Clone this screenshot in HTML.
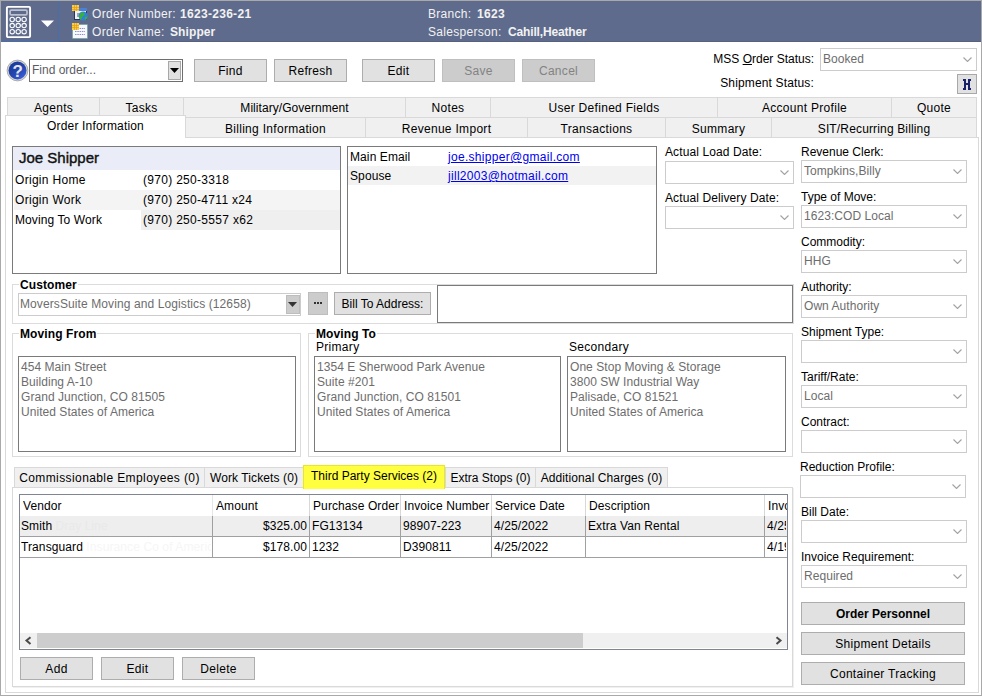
<!DOCTYPE html>
<html><head><meta charset="utf-8">
<style>
*{box-sizing:border-box;margin:0;padding:0}
html,body{width:982px;height:696px;overflow:hidden;background:#fff}
body{position:relative;font-family:"Liberation Sans",sans-serif;font-size:12px;color:#000;letter-spacing:0.3px}
.a{position:absolute}
.t{position:absolute;white-space:pre;line-height:14px}
.b{font-weight:bold}
.frame{left:0;top:0;width:982px;height:696px;border:1px solid #a9a9a9}
.hdr{left:1px;top:1px;width:980px;height:41px;background:#5f6b8c}
.ht{color:#f2f2f2}
.btn{position:absolute;background:#e1e1e1;border:1px solid #adadad;text-align:center;line-height:21px;height:23px;padding-top:1px}
.dis{background:#cccccc;border-color:#bfbfbf;color:#838383}
.tab{position:absolute;background:#f0f0f0;border:1px solid #d9d9d9;text-align:center;line-height:17px;padding-top:2px}
.grp{position:absolute;border:1px solid #dcdcdc}
.gl{position:absolute;background:#fff;font-weight:bold;padding:0 1px 0 1px;line-height:14px;white-space:pre;letter-spacing:0.1px}
.cmb{position:absolute;border:1px solid #cccccc;background:#fff;height:23px;color:#6d6d6d;line-height:21px;padding-left:2px;white-space:pre;letter-spacing:0.05px}
.chev{position:absolute;right:4px;top:8px;width:9px;height:5px}
.tb{position:absolute;border:1px solid #7a7a7a;background:#fff}
.addr{color:#6d6d6d;line-height:15px;white-space:pre;position:absolute;letter-spacing:0.05px}
.lnk{color:#0000f0;text-decoration:underline}
</style></head>
<body>
<div class="a frame"></div>
<div class="a hdr"></div>
<!-- HEADER -->
<div class="a" style="left:58px;top:1px;width:1px;height:41px;background:#4670ac"></div>
<div class="a" style="left:1px;top:41px;width:58px;height:1px;background:#4670ac"></div>
<div class="a" style="left:59px;top:41px;width:922px;height:1px;background:#56617f"></div>
<svg class="a" style="left:0;top:0" width="60" height="42" viewBox="0 0 60 42">
 <rect x="6.9" y="6.9" width="23.2" height="30.2" rx="1.1" fill="none" stroke="#fff" stroke-width="1.9"/>
 <rect x="10.1" y="10.1" width="16.9" height="4.8" rx="1.2" fill="none" stroke="#bcc1cf" stroke-width="1.7"/>
 <g fill="none" stroke="#fff" stroke-width="1.1">
  <circle cx="12.2" cy="19.5" r="2.2"/><circle cx="18.2" cy="19.5" r="2.2"/><circle cx="24.1" cy="19.5" r="2.2"/>
  <circle cx="12.2" cy="25.6" r="2.2"/><circle cx="18.2" cy="25.6" r="2.2"/><circle cx="24.1" cy="25.6" r="2.2"/>
  <circle cx="12.2" cy="31.7" r="2.2"/><circle cx="18.2" cy="31.7" r="2.2"/><circle cx="24.1" cy="31.7" r="2.2"/>
 </g>
 <path d="M41 20.5 L54 20.5 L47.5 27 Z" fill="#fff"/>
</svg>
<svg class="a" style="left:71px;top:5px" width="18" height="35" viewBox="0 0 18 35">
 <rect x="3.5" y="3.5" width="12" height="11" fill="#eef0f6" stroke="#2a3658" stroke-width="1"/>
 <rect x="4" y="3" width="12" height="3" fill="#4a80d8"/>
 <rect x="6" y="8" width="4" height="4" fill="#9aa4b8"/>
 <rect x="1" y="0" width="7" height="6" fill="#f8d040"/>
 <path d="M1 2.5h7M1 4.5h7M3.5 0v6M5.5 0v6" stroke="#e8a020" stroke-width="0.8"/>
 <circle cx="12.2" cy="11" r="4.6" fill="#2f7fe0"/>
 <path d="M10 7.5 q3 -1 4 1.5 q-1 2 -2.5 2.5 q-0.5 2 -2 3.5 q-2 -2 -1.5 -4 z M13.5 12 q2 0 3 -1 q0 3 -2 4.5 z" fill="#38b040"/>
 <rect x="1.5" y="19.5" width="15" height="14" fill="#f8f8ff" stroke="#5a9a8a" stroke-width="1" stroke-dasharray="1 1"/>
 <path d="M4 26.5h10M4 29.5h10M4 23.5h10" stroke="#8a90d0" stroke-width="1" stroke-dasharray="1.5 0.8"/>
 <rect x="1" y="18" width="7" height="7" fill="#f8d040"/>
 <path d="M1 20.5h7M1 22.5h7M3.5 18v7M5.5 18v7" stroke="#e8a020" stroke-width="0.8"/>
</svg>
<div class="t ht" style="left:92px;top:7px">Order Number:</div>
<div class="t ht b" style="left:180px;top:7px">1623-236-21</div>
<div class="t ht" style="left:92px;top:25px">Order Name:</div>
<div class="t ht b" style="left:170px;top:25px;letter-spacing:0.1px">Shipper</div>
<div class="t ht" style="left:428px;top:7px">Branch:</div>
<div class="t ht b" style="left:477px;top:7px">1623</div>
<div class="t ht" style="left:428px;top:25px">Salesperson:</div>
<div class="t ht b" style="left:508px;top:25px;letter-spacing:-0.15px">Cahill,Heather</div>

<!-- TOOLBAR -->
<svg class="a" style="left:6px;top:59px" width="23" height="23" viewBox="0 0 23 23">
 <defs><linearGradient id="hg" x1="0.2" y1="0.1" x2="0.85" y2="0.9"><stop offset="0" stop-color="#1d3a98"/><stop offset="0.55" stop-color="#2446b0"/><stop offset="1" stop-color="#3a60dc"/></linearGradient></defs>
 <circle cx="11.5" cy="11.5" r="10.4" fill="#d4d4d4" stroke="#9c9c9c" stroke-width="0.8"/>
 <circle cx="11.5" cy="11.5" r="9" fill="url(#hg)"/>
 <text x="11.9" y="17.8" text-anchor="middle" font-family="Liberation Sans" font-weight="bold" font-size="17" fill="#e4e6ee">?</text>
</svg>
<div class="a" style="left:29px;top:59px;width:154px;height:23px;border:1px solid #6e6e6e;background:#fff"></div>
<div class="t" style="left:32px;top:63px;color:#5c5c68;letter-spacing:0">Find order...</div>
<div class="a" style="left:168px;top:61px;width:13px;height:19px;border:1px solid #a8a8a8;background:#e1e1e1"></div>
<svg class="a" style="left:170px;top:68px" width="10" height="6"><path d="M0 0H9L4.5 5Z" fill="#000"/></svg>

<div class="btn" style="left:194px;top:59px;width:73px">Find</div>
<div class="btn" style="left:274px;top:59px;width:73px">Refresh</div>
<div class="btn" style="left:362px;top:59px;width:73px">Edit</div>
<div class="btn dis" style="left:442px;top:59px;width:73px">Save</div>
<div class="btn dis" style="left:522px;top:59px;width:73px">Cancel</div>

<div class="t" style="left:614px;top:52px;width:200px;text-align:right;letter-spacing:0">MSS <u>O</u>rder Status:</div>
<div class="cmb" style="left:820px;top:48px;width:157px">Booked<svg class="chev" viewBox="0 0 9 5"><path d="M0.5 0.5L4.5 4.5L8.5 0.5" fill="none" stroke="#a2a2a2" stroke-width="1.1"/></svg></div>
<div class="t" style="left:614px;top:76px;width:200px;text-align:right;letter-spacing:0.15px">Shipment Status:</div>
<div class="a" style="left:957px;top:74px;width:20px;height:20px;border:1px solid #a8a8a8;background:#e1e1e1"></div>
<svg class="a" style="left:963px;top:79px" width="8" height="11" viewBox="0 0 8 11" shape-rendering="crispEdges"><g fill="#18226a"><rect x="0" y="0" width="3" height="2"/><rect x="5" y="0" width="3" height="2"/><rect x="1" y="0" width="2" height="11"/><rect x="5" y="0" width="2" height="11"/><rect x="3" y="4" width="2" height="2"/><rect x="0" y="9" width="3" height="2"/><rect x="5" y="9" width="3" height="2"/></g></svg>
<!-- TABS -->
<div class="a" style="left:5px;top:137px;width:974px;height:556px;border:1px solid #d9d9d9;background:#fff"></div>
<div class="tab" style="left:7px;top:97px;width:93px;height:21px">Agents</div>
<div class="tab" style="left:99px;top:97px;width:85px;height:21px">Tasks</div>
<div class="tab" style="left:183px;top:97px;width:223px;height:21px;letter-spacing:0.05px">Military/Government</div>
<div class="tab" style="left:405px;top:97px;width:86px;height:21px">Notes</div>
<div class="tab" style="left:490px;top:97px;width:228px;height:21px">User Defined Fields</div>
<div class="tab" style="left:717px;top:97px;width:175px;height:21px">Account Profile</div>
<div class="tab" style="left:891px;top:97px;width:86px;height:21px">Quote</div>
<div class="tab" style="left:185px;top:117px;width:181px;height:21px;line-height:19px">Billing Information</div>
<div class="tab" style="left:365px;top:117px;width:163px;height:21px;line-height:19px">Revenue Import</div>
<div class="tab" style="left:527px;top:117px;width:139px;height:21px;line-height:19px">Transactions</div>
<div class="tab" style="left:665px;top:117px;width:107px;height:21px;line-height:19px">Summary</div>
<div class="tab" style="left:771px;top:117px;width:206px;height:21px;line-height:19px;letter-spacing:0.15px">SIT/Recurring Billing</div>
<div class="tab" style="left:5px;top:115px;width:181px;height:23px;background:#fff;border-bottom:none;line-height:19px;padding-top:1px;letter-spacing:0.17px">Order Information</div>

<!-- CONTACT BOX -->
<div class="tb" style="left:12px;top:146px;width:329px;height:128px"></div>
<div class="a" style="left:13px;top:147px;width:327px;height:23px;background:#eaedf8"></div>
<div class="a" style="left:14px;top:190px;width:326px;height:20px;background:#f4f4f4"></div>
<div class="a" style="left:141px;top:210px;width:199px;height:20px;background:#efefef"></div>
<div class="t" style="left:19px;top:149px;font-size:15px;line-height:17px;color:#111;letter-spacing:0;-webkit-text-stroke:0.4px #111">Joe Shipper</div>
<div class="t" style="left:15px;top:173px">Origin Home</div>
<div class="t" style="left:143px;top:173px">(970) 250-3318</div>
<div class="t" style="left:15px;top:193px">Origin Work</div>
<div class="t" style="left:143px;top:193px">(970) 250-4711 x24</div>
<div class="t" style="left:15px;top:213px;letter-spacing:0.1px">Moving To Work</div>
<div class="t" style="left:143px;top:213px">(970) 250-5557 x62</div>

<!-- EMAIL BOX -->
<div class="tb" style="left:347px;top:146px;width:310px;height:128px"></div>
<div class="a" style="left:348px;top:166px;width:308px;height:19px;background:#f2f2f2"></div>
<div class="t" style="left:350px;top:150px;letter-spacing:0.1px">Main Email</div>
<div class="t lnk" style="left:448px;top:150px">joe.shipper@gmail.com</div>
<div class="t" style="left:350px;top:169px;letter-spacing:0.1px">Spouse</div>
<div class="t lnk" style="left:448px;top:169px">jill2003@hotmail.com</div>

<!-- DATES -->
<div class="t" style="left:665px;top:145px;letter-spacing:0.1px">Actual Load Date:</div>
<div class="cmb" style="left:665px;top:161px;width:129px"><svg class="chev" viewBox="0 0 9 5"><path d="M0.5 0.5L4.5 4.5L8.5 0.5" fill="none" stroke="#a2a2a2" stroke-width="1.1"/></svg></div>
<div class="t" style="left:665px;top:191px;letter-spacing:0.1px">Actual Delivery Date:</div>
<div class="cmb" style="left:665px;top:206px;width:129px"><svg class="chev" viewBox="0 0 9 5"><path d="M0.5 0.5L4.5 4.5L8.5 0.5" fill="none" stroke="#a2a2a2" stroke-width="1.1"/></svg></div>
<!-- RIGHT COLUMN -->
<div class="t" style="left:801px;top:145px;letter-spacing:0">Revenue Clerk:</div>
<div class="cmb" style="left:801px;top:160px;width:166px">Tompkins,Billy<svg class="chev" viewBox="0 0 9 5"><path d="M0.5 0.5L4.5 4.5L8.5 0.5" fill="none" stroke="#a2a2a2" stroke-width="1.1"/></svg></div>
<div class="t" style="left:801px;top:190px;letter-spacing:0">Type of Move:</div>
<div class="cmb" style="left:801px;top:205px;width:166px">1623:COD Local<svg class="chev" viewBox="0 0 9 5"><path d="M0.5 0.5L4.5 4.5L8.5 0.5" fill="none" stroke="#a2a2a2" stroke-width="1.1"/></svg></div>
<div class="t" style="left:801px;top:235px;letter-spacing:0">Commodity:</div>
<div class="cmb" style="left:801px;top:250px;width:166px">HHG<svg class="chev" viewBox="0 0 9 5"><path d="M0.5 0.5L4.5 4.5L8.5 0.5" fill="none" stroke="#a2a2a2" stroke-width="1.1"/></svg></div>
<div class="t" style="left:801px;top:280px;letter-spacing:0">Authority:</div>
<div class="cmb" style="left:801px;top:295px;width:166px">Own Authority<svg class="chev" viewBox="0 0 9 5"><path d="M0.5 0.5L4.5 4.5L8.5 0.5" fill="none" stroke="#a2a2a2" stroke-width="1.1"/></svg></div>
<div class="t" style="left:801px;top:325px;letter-spacing:0">Shipment Type:</div>
<div class="cmb" style="left:801px;top:340px;width:166px"><svg class="chev" viewBox="0 0 9 5"><path d="M0.5 0.5L4.5 4.5L8.5 0.5" fill="none" stroke="#a2a2a2" stroke-width="1.1"/></svg></div>
<div class="t" style="left:801px;top:370px;letter-spacing:0">Tariff/Rate:</div>
<div class="cmb" style="left:801px;top:385px;width:166px">Local<svg class="chev" viewBox="0 0 9 5"><path d="M0.5 0.5L4.5 4.5L8.5 0.5" fill="none" stroke="#a2a2a2" stroke-width="1.1"/></svg></div>
<div class="t" style="left:801px;top:415px;letter-spacing:0">Contract:</div>
<div class="cmb" style="left:801px;top:430px;width:166px"><svg class="chev" viewBox="0 0 9 5"><path d="M0.5 0.5L4.5 4.5L8.5 0.5" fill="none" stroke="#a2a2a2" stroke-width="1.1"/></svg></div>
<div class="t" style="left:800px;top:460px;letter-spacing:0">Reduction Profile:</div>
<div class="cmb" style="left:800px;top:475px;width:166px"><svg class="chev" viewBox="0 0 9 5"><path d="M0.5 0.5L4.5 4.5L8.5 0.5" fill="none" stroke="#a2a2a2" stroke-width="1.1"/></svg></div>
<div class="t" style="left:801px;top:505px;letter-spacing:0">Bill Date:</div>
<div class="cmb" style="left:801px;top:520px;width:166px"><svg class="chev" viewBox="0 0 9 5"><path d="M0.5 0.5L4.5 4.5L8.5 0.5" fill="none" stroke="#a2a2a2" stroke-width="1.1"/></svg></div>
<div class="t" style="left:801px;top:550px;letter-spacing:0">Invoice Requirement:</div>
<div class="cmb" style="left:801px;top:565px;width:166px">Required<svg class="chev" viewBox="0 0 9 5"><path d="M0.5 0.5L4.5 4.5L8.5 0.5" fill="none" stroke="#a2a2a2" stroke-width="1.1"/></svg></div>
<div class="btn b" style="left:801px;top:602px;width:164px;letter-spacing:0">Order Personnel</div>
<div class="btn" style="left:801px;top:632px;width:164px">Shipment Details</div>
<div class="btn" style="left:801px;top:662px;width:164px">Container Tracking</div>
<!-- CUSTOMER -->
<div class="grp" style="left:12px;top:284px;width:782px;height:40px"></div>
<div class="gl" style="left:19px;top:278px">Customer</div>
<div class="a" style="left:18px;top:293px;width:283px;height:23px;border:1px solid #cccccc;background:#fff"></div>
<div class="t" style="left:20px;top:297px;color:#6d6d6d;letter-spacing:0.1px">MoversSuite Moving and Logistics (12658)</div>
<div class="a" style="left:286px;top:295px;width:14px;height:19px;border:1px solid #bdbdbd;background:#cccccc"></div>
<svg class="a" style="left:288px;top:302px" width="10" height="6"><path d="M0 0H9L4.5 5Z" fill="#333"/></svg>
<div class="a" style="left:308px;top:292px;width:20px;height:23px;border:1px solid #bdbdbd;background:#cccccc"></div>
<svg class="a" style="left:313px;top:302px" width="10" height="3"><rect x="1" y="0" width="2" height="2" fill="#333"/><rect x="4" y="0" width="2" height="2" fill="#333"/><rect x="7" y="0" width="2" height="2" fill="#333"/></svg>
<div class="btn" style="left:334px;top:292px;width:97px;letter-spacing:0">Bill To Address:</div>
<div class="tb" style="left:437px;top:285px;width:356px;height:38px"></div>

<!-- MOVING FROM -->
<div class="grp" style="left:12px;top:333px;width:289px;height:124px"></div>
<div class="gl" style="left:19px;top:327px">Moving From</div>
<div class="tb" style="left:18px;top:356px;width:278px;height:96px"></div>
<div class="addr" style="left:21px;top:360px">454 Main Street
Building A-10
Grand Junction, CO 81505
United States of America</div>

<!-- MOVING TO -->
<div class="grp" style="left:308px;top:333px;width:485px;height:124px"></div>
<div class="gl" style="left:315px;top:327px">Moving To</div>
<div class="t" style="left:316px;top:340px">Primary</div>
<div class="tb" style="left:314px;top:356px;width:247px;height:96px"></div>
<div class="addr" style="left:317px;top:360px">1354 E Sherwood Park Avenue
Suite #201
Grand Junction, CO 81501
United States of America</div>
<div class="t" style="left:569px;top:340px">Secondary</div>
<div class="tb" style="left:567px;top:356px;width:219px;height:96px"></div>
<div class="addr" style="left:570px;top:360px">One Stop Moving &amp; Storage
3800 SW Industrial Way
Palisade, CO 81521
United States of America</div>

<!-- LOWER TABS -->
<div class="a" style="left:13px;top:488px;width:781px;height:200px;border-right:1px solid #f0f0f0;border-bottom:1px solid #f0f0f0"></div>
<div class="a" style="left:12px;top:487px;width:781px;height:200px;border:1px solid #d9d9d9;background:#fff"></div>
<div class="tab" style="left:14px;top:467px;width:191px;height:21px;line-height:16px;letter-spacing:0.4px">Commissionable Employees (0)</div>
<div class="tab" style="left:204px;top:467px;width:100px;height:21px;line-height:16px;letter-spacing:0.1px">Work Tickets (0)</div>
<div class="tab" style="left:445px;top:467px;width:91px;height:21px;line-height:16px;letter-spacing:0">Extra Stops (0)</div>
<div class="tab" style="left:535px;top:467px;width:133px;height:21px;line-height:16px;letter-spacing:0.1px">Additional Charges (0)</div>
<div class="tab" style="left:303px;top:465px;width:142px;height:24px;background:#ffff40;border-color:#e8e820;border-bottom:none;line-height:17px;letter-spacing:0">Third Party Services (2)</div>

<!-- GRID -->
<div class="tb" style="left:19px;top:494px;width:769px;height:156px;overflow:hidden;border-color:#7f8591">
</div>
<!-- GRID CONTENT -->
<div class="a" style="left:20px;top:516px;width:767px;height:20px;background:#eeeeee"></div>
<div class="a" style="left:20px;top:536px;width:767px;height:1px;background:#a0a0a0"></div>
<div class="a" style="left:20px;top:557px;width:767px;height:1px;background:#a0a0a0"></div>
<div class="a" style="left:212px;top:495px;width:1px;height:21px;background:#e6e6e6"></div>
<div class="a" style="left:212px;top:516px;width:1px;height:42px;background:#a0a0a0"></div>
<div class="a" style="left:309px;top:495px;width:1px;height:21px;background:#d8d8d8"></div>
<div class="a" style="left:309px;top:516px;width:1px;height:42px;background:#a0a0a0"></div>
<div class="a" style="left:400px;top:495px;width:1px;height:21px;background:#d8d8d8"></div>
<div class="a" style="left:400px;top:516px;width:1px;height:42px;background:#a0a0a0"></div>
<div class="a" style="left:491px;top:495px;width:1px;height:21px;background:#d8d8d8"></div>
<div class="a" style="left:491px;top:516px;width:1px;height:42px;background:#a0a0a0"></div>
<div class="a" style="left:585px;top:495px;width:1px;height:21px;background:#d8d8d8"></div>
<div class="a" style="left:585px;top:516px;width:1px;height:42px;background:#a0a0a0"></div>
<div class="a" style="left:764px;top:495px;width:1px;height:21px;background:#d8d8d8"></div>
<div class="a" style="left:764px;top:516px;width:1px;height:42px;background:#a0a0a0"></div>
<div class="t" style="letter-spacing:0.1px;left:23px;top:499px;width:189px;overflow:hidden">Vendor</div>
<div class="t" style="letter-spacing:0.1px;left:216px;top:499px;width:93px;overflow:hidden">Amount</div>
<div class="t" style="letter-spacing:0.1px;left:313px;top:499px;width:87px;overflow:hidden">Purchase Order</div>
<div class="t" style="letter-spacing:0.1px;left:404px;top:499px;width:87px;overflow:hidden">Invoice Number</div>
<div class="t" style="letter-spacing:0.1px;left:495px;top:499px;width:90px;overflow:hidden">Service Date</div>
<div class="t" style="letter-spacing:0.1px;left:589px;top:499px;width:175px;overflow:hidden">Description</div>
<div class="t" style="letter-spacing:0.1px;left:768px;top:499px;width:19px;overflow:hidden">Invoice Date</div>
<div class="t" style="letter-spacing:0.1px;left:21px;top:519px;width:190px;overflow:hidden">Smith<span style="color:#e9e9e9"> Dray Line</span></div>
<div class="t" style="letter-spacing:0.1px;left:216px;top:519px;width:91px;text-align:right">$325.00</div>
<div class="t" style="letter-spacing:0.1px;left:312px;top:519px;width:87px;overflow:hidden">FG13134</div>
<div class="t" style="letter-spacing:0.1px;left:403px;top:519px;width:87px;overflow:hidden">98907-223</div>
<div class="t" style="letter-spacing:0.1px;left:494px;top:519px;width:90px;overflow:hidden">4/25/2022</div>
<div class="t" style="letter-spacing:0.1px;left:588px;top:519px;width:175px;overflow:hidden">Extra Van Rental</div>
<div class="t" style="letter-spacing:0.1px;left:767px;top:519px;width:19px;overflow:hidden">4/25/2022</div>
<div class="t" style="letter-spacing:0.1px;left:21px;top:540px;width:190px;overflow:hidden">Transguard<span style="color:#f6f6f6"> Insurance Co of America</span></div>
<div class="t" style="letter-spacing:0.1px;left:216px;top:540px;width:91px;text-align:right">$178.00</div>
<div class="t" style="letter-spacing:0.1px;left:312px;top:540px;width:87px;overflow:hidden">1232</div>
<div class="t" style="letter-spacing:0.1px;left:403px;top:540px;width:87px;overflow:hidden">D390811</div>
<div class="t" style="letter-spacing:0.1px;left:494px;top:540px;width:90px;overflow:hidden">4/25/2022</div>
<div class="t" style="letter-spacing:0.1px;left:767px;top:540px;width:19px;overflow:hidden">4/19/2022</div>
<div class="a" style="left:20px;top:633px;width:767px;height:15px;background:#f0f0f0"></div>
<div class="a" style="left:37px;top:633px;width:546px;height:15px;background:#cdcdcd"></div>
<svg class="a" style="left:24px;top:636px" width="10" height="10"><path d="M6.5 1.2L2.5 4.6L6.5 8" fill="none" stroke="#4a4a4a" stroke-width="2"/></svg>
<svg class="a" style="left:773px;top:636px" width="10" height="10"><path d="M3.5 1.2L7.5 4.6L3.5 8" fill="none" stroke="#4a4a4a" stroke-width="2"/></svg>
<div class="btn" style="left:20px;top:657px;width:73px">Add</div>
<div class="btn" style="left:101px;top:657px;width:73px">Edit</div>
<div class="btn" style="left:182px;top:657px;width:73px">Delete</div>
</body></html>
